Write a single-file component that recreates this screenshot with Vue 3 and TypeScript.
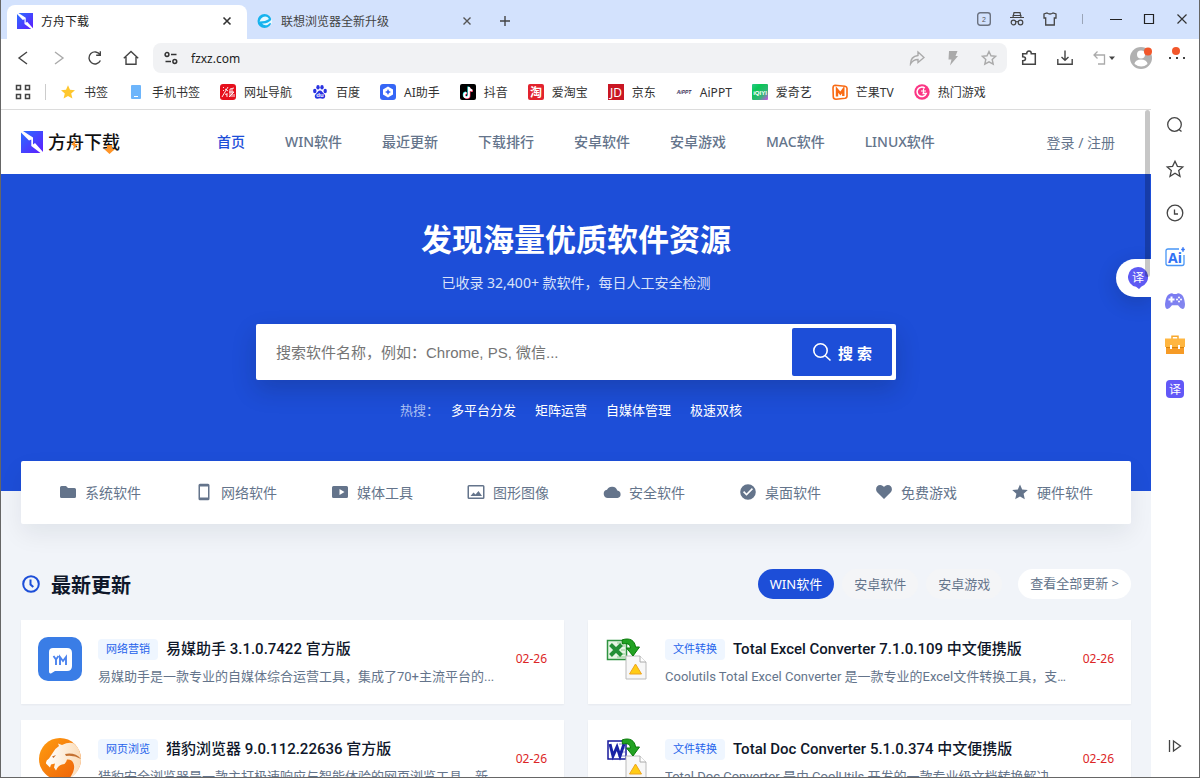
<script setup lang="ts">
import { ref } from 'vue'

interface Glyph {
  label: string
  svg: string
}
interface Entry {
  tag: string
  title: string
  desc: string
  date: string
  icon: string
}

const arkMark =
  '<defs><linearGradient id="ark" x1="0" y1="0" x2="1" y2="1"><stop offset="0" stop-color="#2a6fff"/><stop offset="1" stop-color="#5f1bff"/></linearGradient></defs><rect width="22" height="22" fill="url(#ark)"/><path d="M0 0h2l10 6.500V13.500l2-1.500 8 9v1h-2.500L10.300 15V8.500L8 9.500 0 1.500z" fill="#fff"/>'

const bookmarks: Glyph[] = [
  { label: '书签', svg: '<path d="M8 1.2l2 4.6 5 .5-3.800 3.300 1.200 5L8 12l-4.400 2.600 1.200-5L1 6.300l5-.5z" fill="#fec72e"/>' },
  { label: '手机书签', svg: '<rect x="3" y="1" width="10" height="14" rx="1" fill="#6db5fb"/><path d="M6 12.500h4" stroke="#fff"/>' },
  { label: '网址导航', svg: '<rect width="16" height="16" rx="3" fill="#e60f1c"/><path d="M3 3l1 1M3 6l1 1M8 3L2 13M5 5l3 2M10 5l4-1M9 8h5M10 5v8M12 5v8M9 13l5-5M7 9v4M14 10v3M5 10l2 1" stroke="#fff" stroke-width=".9" fill="none"/>' },
  { label: '百度', svg: '<g fill="#2932e1"><ellipse cx="2.800" cy="7" rx="1.700" ry="2.200"/><ellipse cx="6" cy="3.200" rx="1.700" ry="2.300"/><ellipse cx="10" cy="3.200" rx="1.700" ry="2.300"/><ellipse cx="13.200" cy="7" rx="1.700" ry="2.200"/><path d="M8 6.500c2 0 2.500 2 4 3.200 2 1.600 1.500 5-1.200 5-1 0-1.800-.4-2.800-.4s-1.800.4-2.800.4c-2.700 0-3.200-3.400-1.200-5C5.500 8.500 6 6.500 8 6.500z"/></g><text x="8" y="13.300" font-size="6" text-anchor="middle" font-weight="700" fill="#fff" font-family="Liberation Sans">du</text>' },
  { label: 'AI助手', svg: '<rect width="16" height="16" rx="3" fill="#3566f6"/><path d="M8 2.500l5 3v5l-5 3-5-3v-5z" fill="#fff"/><path d="M8 5l1 2 2 1-2 1-1 2-1-2-2-1 2-1z" fill="#3566f6"/>' },
  { label: '抖音', svg: '<rect width="16" height="16" rx="2" fill="#000"/><g fill="none" stroke-width="1.900"><path d="M8.300 2.500v8.200a2.300 2.300 0 1 1-2.300-2.300M8.300 3c.3 1.800 1.600 2.800 3.400 3" stroke="#25f4ee"/><path d="M9.500 3.500v8.200a2.300 2.300 0 1 1-2.300-2.300M9.500 4c.3 1.800 1.600 2.800 3.400 3" stroke="#fe2c55"/><path d="M8.900 3v8.200a2.300 2.300 0 1 1-2.300-2.300M8.900 3.500c.3 1.800 1.600 2.800 3.400 3" stroke="#fff"/></g>' },
  { label: '爱淘宝', svg: '<rect width="16" height="16" rx="2" fill="#e2232e"/><text x="8" y="12.500" font-size="12" font-weight="700" text-anchor="middle" fill="#fff" font-family="Noto Sans CJK SC">淘</text>' },
  { label: '京东', svg: '<rect width="16" height="16" fill="#c91623"/><text x="8" y="12.500" font-size="12" text-anchor="middle" fill="#fff" font-family="Noto Sans">JD</text>' },
  { label: 'AiPPT', svg: '<text x="8" y="10" font-size="5" font-style="italic" font-weight="700" text-anchor="middle" fill="#3b3159" font-family="Liberation Sans">AiPPT</text>' },
  { label: '爱奇艺', svg: '<defs><linearGradient id="qy" x1="0" y1="0" x2="1" y2="1"><stop offset="0" stop-color="#2ac98a"/><stop offset=".3" stop-color="#08c755"/><stop offset=".68" stop-color="#35b478"/><stop offset="1" stop-color="#d649ef"/></linearGradient></defs><rect width="16" height="16" rx="1" fill="url(#qy)"/><text x="8" y="10.500" font-size="6" font-weight="700" text-anchor="middle" fill="#fff" font-family="Liberation Sans">iQIYI</text>' },
  { label: '芒果TV', svg: '<path d="M3 1.200L13 2.200q2 .3 2 2V12q0 2-2 2.300L4 15.200q-2.500 0-2.700-2L1 4Q1 1.500 3 1.200z" fill="none" stroke="#f96a13" stroke-width="1.600"/><path d="M5 12.500V5.500l3.400 4L11.300 5.500v6.500" fill="none" stroke="#f96a13" stroke-width="2.400"/>' },
  { label: '热门游戏', svg: '<circle cx="8" cy="8" r="7.700" fill="#fb3684"/><path d="M10.800 4.200A4.700 4.700 0 1 0 12.200 9.500H8.500" fill="none" stroke="#fff" stroke-width="1.500"/><path d="M7 7h5M9.500 4.500v5" stroke="#fff" stroke-width="1.200"/>' },
]

const navLinks: string[] = ['首页', 'WIN软件', '最近更新', '下载排行', '安卓软件', '安卓游戏', 'MAC软件', 'LINUX软件']
const hotWords: string[] = ['多平台分发', '矩阵运营', '自媒体管理', '极速双核']

const categories: Glyph[] = [
  { label: '系统软件', svg: '<path d="M1 4.500Q1 3 2.500 3H7l2 2h6.500Q17 5 17 6.500v7q0 1.500-1.500 1.500h-13Q1 15 1 13.500z"/>' },
  { label: '网络软件', svg: '<path fill-rule="evenodd" d="M5 .8h8q1.500 0 1.500 1.500v13.400q0 1.500-1.500 1.500H5q-1.500 0-1.500-1.500V2.300Q3.500.8 5 .8zM5 3.500v11h8v-11z"/>' },
  { label: '媒体工具', svg: '<path fill-rule="evenodd" d="M2.500 3h13Q17 3 17 4.500v9q0 1.500-1.500 1.500h-13Q1 15 1 13.500v-9Q1 3 2.500 3zM8.500 6v6l5-3z"/>' },
  { label: '图形图像', svg: '<path fill-rule="evenodd" d="M2 2h14q1.500 0 1.500 1.500v11Q17.500 16 16 16H2Q.5 16 .5 14.500v-11Q.5 2 2 2zm0 1.500v11h14v-11zM3.500 13l3-3.500 2 2L11.500 8l3.500 5z"/>' },
  { label: '安全软件', svg: '<path d="M5 15a4.200 4.200 0 0 1-1-8.300A5.600 5.600 0 0 1 14.300 7.500 3.800 3.800 0 0 1 14.500 15z"/>' },
  { label: '桌面软件', svg: '<path fill-rule="evenodd" d="M9 1.200a7.800 7.800 0 1 1 0 15.600A7.800 7.800 0 0 1 9 1.200zM4 9.200l3.500 3.500L14 6.200 12.900 5 7.500 10.400 5.200 8z"/>' },
  { label: '免费游戏', svg: '<path d="M9 16L2.700 9.800C-.5 6.500 1.500 2 5.200 2 7 2 8.200 3 9 4.100 9.800 3 11 2 12.800 2c3.700 0 5.700 4.500 2.500 7.800z"/>' },
  { label: '硬件软件', svg: '<path d="M9 1.500l2.200 5.100 5.600.5-4.200 3.700 1.200 5.400L9 13.400l-4.800 2.800 1.200-5.400L1.200 7.100l5.600-.5z"/>' },
]

const tabs: string[] = ['WIN软件', '安卓软件', '安卓游戏']
const activeTab = ref<string>('WIN软件')
const query = ref<string>('')

const convertTail =
  '<path d="M26 27h14l6 6v17H26z" fill="#f7f7f7" stroke="#bbb"/><path d="M40 27v6h6" fill="#fff" stroke="#aaa"/><path d="M35.500 35l6 10h-12z" fill="#ffcc14" stroke="#eea31d"/><path d="M22 11c8-3 13 1 13.500 7h4L33 27l-6.500-8h4c-.5-4-3-5-8-4z" fill="#22a222" stroke="#087a08"/>'

const entries: Entry[] = [
  {
    tag: '网络营销',
    title: '易媒助手 3.1.0.7422 官方版',
    desc: '易媒助手是一款专业的自媒体综合运营工具，集成了70+主流平台的...',
    date: '02-26',
    icon: '<rect width="44" height="44" rx="10" fill="#3a7de6"/><path d="M15 11h14q5 0 5 5v13q0 5-5 5H17l-4 2.500q-2 .5-2-2V15q0-4 4-4z" fill="#fff"/><path d="M15.500 19l2.500 3.500V28M20.500 19l-2.500 3.500M22 28v-8l3 4 3-4v8" fill="none" stroke="#4b83ee" stroke-width="1.900"/>',
  },
  {
    tag: '文件转换',
    title: 'Total Excel Converter 7.1.0.109 中文便携版',
    desc: 'Coolutils Total Excel Converter 是一款专业的Excel文件转换工具，支...',
    date: '02-26',
    icon: '<g transform="translate(-5 -9)"><rect x="7.500" y="12.500" width="19" height="19" fill="#e7f5e4" stroke="#2e9340" stroke-width="1.500"/><path d="M17 15h8M20 18h5M21 22h4M20 26h5M17 29h8" stroke="#91c990"/><path d="M10.500 16.500l11 11M21.500 16.500l-11 11" stroke="#249036" stroke-width="4"/><g transform="translate(0 1)">' + convertTail + '</g></g>',
  },
  {
    tag: '网页浏览',
    title: '猎豹浏览器 9.0.112.22636 官方版',
    desc: '猎豹安全浏览器是一款主打极速响应与智能体验的网页浏览工具，新...',
    date: '02-26',
    icon: '<defs><linearGradient id="chee" x1="0" y1="0" x2="1" y2="1"><stop offset="0" stop-color="#ff9d10"/><stop offset="1" stop-color="#ed5f09"/></linearGradient><linearGradient id="fur" x1="0" y1="0" x2="1" y2="0"><stop offset="0" stop-color="#fff"/><stop offset="1" stop-color="#fbdcb8"/></linearGradient></defs><circle cx="22" cy="22" r="21" fill="url(#chee)"/><path d="M21 9l-1-2.500 4 1.500q7-3.500 12-1.500 7 6 7 15.500 0 13-12 20 7-9 4.500-15.500Q34 22 29 22.500q-1 5-5 5-4 1-6 6l-2-3 1-4-4 1-1 3-4-4q-.5-3 3-5l4-6q2-4 6-6.500z" fill="url(#fur)"/><path d="M14 19.500l4-1.500-2.500 3zM27 17q10-2 16 5-7-4-15-3z" fill="#c47132"/>',
  },
  {
    tag: '文件转换',
    title: 'Total Doc Converter 5.1.0.374 中文便携版',
    desc: 'Total Doc Converter 是由 CoolUtils 开发的一款专业级文档转换解决方...',
    date: '02-26',
    icon: '<g transform="translate(-5 -9)"><rect x="8" y="13" width="18" height="18" fill="#fff" stroke="#17189c" stroke-width="1.500"/><path d="M19 16h6M22 20h3M22 24h3M18 28h7" stroke="#8890d8"/><path d="M10 16l3 12 4-9 3 9 4-12" fill="none" stroke="#1823a5" stroke-width="3"/><g transform="translate(0 1)">' + convertTail + '</g></g>',
  },
]

const sideTools: Glyph[] = [
  { label: '搜索', svg: '<circle cx="9.500" cy="9.500" r="6.800" fill="none" stroke="#444" stroke-width="1.300"/><path d="M14 14.500l2.500 2" stroke="#444" stroke-width="1.400"/>' },
  { label: '收藏', svg: '<path d="M10 2.200l2.400 5.100 5.400.6-4.100 3.700 1.300 5.800-5-3.100-5 3.100 1.300-5.800L2.200 7.900l5.400-.6z" fill="none" stroke="#444" stroke-width="1.300"/>' },
  { label: '历史', svg: '<circle cx="10" cy="10" r="7.800" fill="none" stroke="#444" stroke-width="1.300"/><path d="M9.500 6.500V11H13" fill="none" stroke="#444" stroke-width="1.300"/>' },
  { label: 'AI', svg: '<path d="M14 2H3Q1 2 1 4v12.500q0 2 2 2h14q2 0 2-2V8" fill="none" stroke="#4795f6" stroke-width="1.300"/><path d="M18 0l.7 1.800 1.300.7-1.300.7L18 5l-.7-1.800L16 2.500l1.300-.7z" fill="#3476f6" stroke="#3476f6" stroke-width=".5"/><text x="10" y="15.500" font-size="14" font-weight="700" text-anchor="middle" fill="#3172f4" font-family="Noto Sans">Ai</text>' },
  { label: '游戏', svg: '<defs><linearGradient id="pad" x1="0" y1="0" x2="1" y2="1"><stop offset="0" stop-color="#7777f4"/><stop offset="1" stop-color="#8589ed"/></linearGradient></defs><path d="M4.500 3Q7 1.500 8.500 3h3Q13 1.500 15.500 3 19 4 20 13q0 5-2.500 5Q15 17 13 14.200H7Q5 17 2.500 18 0 18 0 13 1 4 4.500 3z" fill="url(#pad)"/><path d="M6.500 5.500v6M3.500 8.500h6" stroke="#fff" stroke-width="2"/><g fill="#fff"><circle cx="14" cy="6.500" r="1"/><circle cx="14" cy="10.500" r="1"/><circle cx="12" cy="8.500" r="1"/><circle cx="16" cy="8.500" r="1"/></g>' },
  { label: '工具箱', svg: '<path d="M7 4V1.300h6V4" fill="none" stroke="#f7a82d" stroke-width="1.500"/><rect x="1" y="9" width="18" height="10" fill="#f69b26"/><path d="M0 3.500h20V12H0z" fill="#ffb640"/><path d="M1 12.500h18" stroke="#d7820b"/><path d="M6 10v4M14 10v4" stroke="#fff" stroke-width="2"/>' },
  { label: '翻译', svg: '<rect x="1" y="1" width="18" height="18" rx="4" fill="#6258f7"/><text x="10" y="14.500" font-size="12" text-anchor="middle" fill="#fff" font-family="Noto Sans CJK SC">译</text>' },
]
</script>

<template>
  <div class="browser">
    <div class="titlebar">
      <div class="tab active">
        <svg class="i16" viewBox="0 0 22 22" v-html="arkMark"></svg>
        <span>方舟下载</span>
        <button class="close" aria-label="关闭标签页"><svg viewBox="0 0 10 10"><path d="M1.500 1.500l7 7M8.500 1.500l-7 7" stroke="#333" stroke-width="1.600" /></svg></button>
      </div>
      <div class="tab">
        <svg class="i16" viewBox="0 0 16 16"><circle cx="7.500" cy="8" r="7" fill="#17b3ee" /><path d="M2.500 8.500q6 0 9.500-2.500-2-3.500-6-2-2.500 1.300-3.500 4.500zM15 6q-4 5-10 4.500 2 2.500 5.500 1.500l2.500-2 2 1q0-2 0-5z" fill="#e6f8ff" /></svg>
        <span>联想浏览器全新升级</span>
        <button class="close" aria-label="关闭标签页"><svg viewBox="0 0 10 10"><path d="M1.500 1.500l7 7M8.500 1.500l-7 7" stroke="#555" stroke-width="1.400" /></svg></button>
      </div>
      <button class="newtab" aria-label="新建标签页"><svg class="i12" viewBox="0 0 12 12"><path d="M6 1v10M1 6h10" stroke="#444" stroke-width="1.400" /></svg></button>
      <div class="winbtns">
        <button aria-label="标签页列表"><svg class="i16" viewBox="0 0 16 16"><rect x="1.700" y="1.700" width="12.600" height="12.600" rx="2.500" fill="none" stroke="#6b7280" stroke-width="1.400" /><text x="8" y="10.500" font-size="7" text-anchor="middle" fill="#555" font-family="Liberation Sans">2</text></svg></button>
        <button aria-label="无痕模式"><svg class="i16" viewBox="0 0 16 16" fill="none" stroke="#444" stroke-width="1.200"><path d="M4 6l1-4.400h6L12 6M1 6.500h14M3.500 4.500h9M6.500 11q1.500-1 3 0" /><circle cx="4.500" cy="11.500" r="2.300" /><circle cx="11.500" cy="11.500" r="2.300" /></svg></button>
        <button aria-label="皮肤"><svg class="i16" viewBox="0 0 16 16"><path d="M5 2q3 2 6 0l3 1v4h-1.700v7H3.700V7H2V3z" fill="none" stroke="#444" stroke-width="1.300" /></svg></button>
        <span class="sep"></span>
        <button aria-label="最小化"><svg class="i12" viewBox="0 0 12 12"><path d="M0 6.500h12" stroke="#222" /></svg></button>
        <button aria-label="最大化"><svg class="i12" viewBox="0 0 12 12"><path d="M1.500 1.500h9v9h-9z" fill="none" stroke="#222" stroke-width="1.200" /></svg></button>
        <button aria-label="关闭"><svg class="i12" viewBox="0 0 12 12"><path d="M1.500 1.500l9 9M10.500 1.500l-9 9" stroke="#333" stroke-width="1.200" /></svg></button>
      </div>
    </div>

    <div class="toolbar">
      <button aria-label="后退"><svg class="i16" viewBox="0 0 16 16"><path d="M12 2L4 8l8 6" fill="none" stroke="#444" stroke-width="1.400" /></svg></button>
      <button aria-label="前进"><svg class="i16" viewBox="0 0 16 16"><path d="M4 2l8 6-8 6" fill="none" stroke="#aaa" stroke-width="1.400" /></svg></button>
      <button aria-label="刷新"><svg class="i16" viewBox="0 0 16 16"><path d="M13 4.600A6 6 0 1 0 13.400 10.500M13.300 1.200v4H9.200" fill="none" stroke="#444" stroke-width="1.400" /></svg></button>
      <button aria-label="主页"><svg class="i16" viewBox="0 0 16 16"><path d="M.8 8.200L8 1.500l7.200 6.700M3 7v7.300h10V7" fill="none" stroke="#444" stroke-width="1.400" /></svg></button>
      <div class="omnibox">
        <svg class="i16" viewBox="0 0 16 16" fill="none" stroke="#333" stroke-width="1.500"><circle cx="4" cy="4.500" r="1.900" /><path d="M8 4.500h5.500M2.500 11.500H8" /><circle cx="11.800" cy="11.500" r="1.900" /></svg>
        <input type="text" value="fzxz.com" aria-label="地址栏" />
        <button aria-label="分享"><svg class="i16" viewBox="0 0 16 16"><path d="M9 2l6 5.500-6 5V9.500Q4 9.500 1.500 14 1.500 6.500 9 5.500z" fill="none" stroke="#aaa" stroke-width="1.400" /></svg></button>
        <button aria-label="极速"><svg class="i16" viewBox="0 0 16 16"><path d="M4 1h8.500L10.500 6H13L5 15.500 6.500 9.500H3.500z" fill="#aaa" /></svg></button>
        <button aria-label="收藏本页"><svg class="i16" viewBox="0 0 16 16"><path d="M8 1.500l2 4.300 4.700.5-3.500 3.200 1 4.700L8 11.800l-4.200 2.400 1-4.700L1.300 6.300 6 5.800z" fill="none" stroke="#aaa" stroke-width="1.400" /></svg></button>
      </div>
      <button aria-label="扩展"><svg class="i16" viewBox="0 0 16 16"><path d="M1.700 3.700h4q0-2.700 2.300-2.700t2.300 2.700h4v10.600H1.700v-3.500q2.800 0 2.800-2t-2.800-2z" fill="none" stroke="#444" stroke-width="1.500" /></svg></button>
      <button aria-label="下载"><svg class="i16" viewBox="0 0 16 16"><path d="M8 .5V10M4.500 7L8 10.200 11.500 7M.8 9v5.300h14.400V9" fill="none" stroke="#444" stroke-width="1.400" /></svg></button>
      <button class="undo" aria-label="恢复"><svg viewBox="0 0 24 16"><path d="M6.500 1.500L3 5l3.500 3.500M3 5h10.500v9H7" fill="none" stroke="#aaa" stroke-width="1.300" /><path d="M18 6.500h6l-3 3.500z" fill="#444" /></svg></button>
      <button aria-label="账户"><svg class="i22" viewBox="0 0 22 22"><circle cx="11" cy="11" r="11" fill="#b1b1b1" /><circle cx="11" cy="7.500" r="4" fill="#fff" /><path d="M4.500 17a6.500 4.500 0 0 1 13 0q-6 5-13 0z" fill="#fff" /><circle cx="18" cy="4.500" r="4" fill="#f2572b" /></svg></button>
      <button aria-label="菜单"><svg class="i22" viewBox="0 0 22 22"><circle cx="10" cy="4" r="4" fill="#f2572b" /><path d="M3 10h2v2H3zM10 10h2v2h-2zM17 10h2v2h-2z" fill="#444" /></svg></button>
    </div>

    <nav class="bookmarks" aria-label="书签栏">
      <button aria-label="全部应用"><svg class="i16" viewBox="0 0 16 16" fill="none" stroke="#444" stroke-width="1.500"><path d="M1.500 1.500h4v4h-4zM10.500 1.500h4v4h-4zM1.500 10.500h4v4h-4zM10.500 10.500h4v4h-4z" /></svg></button>
      <span class="bsep"></span>
      <a v-for="b in bookmarks" :key="b.label" href="#"><svg class="i16" viewBox="0 0 16 16" v-html="b.svg"></svg>{{ b.label }}</a>
    </nav>

    <div class="body">
      <div class="page">
        <header class="header">
          <a class="logo" href="#">
            <svg class="i22" viewBox="0 0 22 22" v-html="arkMark"></svg>
            <span>方舟下载</span>
            <svg class="sparks" viewBox="0 0 72 24"><path d="M28 8l-5 6h3l-1 5 5-6h-3z" fill="#ff9528" /><path d="M59 14h5v4h3l-5.500 5L56 18h3z" fill="#ff9528" /></svg>
          </a>
          <nav class="nav">
            <a v-for="(n, i) in navLinks" :key="n" href="#" :class="{ on: i === 0 }">{{ n }}</a>
          </nav>
          <a class="login" href="#">登录 / 注册</a>
        </header>

        <section class="hero">
          <h1>发现海量优质软件资源</h1>
          <p>已收录 32,400+ 款软件，每日人工安全检测</p>
          <form class="search" @submit.prevent>
            <input v-model="query" type="text" aria-label="搜索软件" placeholder="搜索软件名称，例如：Chrome, PS, 微信..." />
            <button type="submit">
              <svg viewBox="0 0 20 20"><circle cx="8.500" cy="8.500" r="6.700" fill="none" stroke="#fff" stroke-width="1.600" /><path d="M13 13.500l5.500 5" stroke="#fff" stroke-width="1.600" /></svg>
              <span>搜 索</span>
            </button>
          </form>
          <div class="hot">
            <span>热搜：</span>
            <a v-for="h in hotWords" :key="h" href="#">{{ h }}</a>
          </div>
        </section>

        <main class="content">
          <nav class="cats" aria-label="软件分类">
            <a v-for="c in categories" :key="c.label" href="#"><svg viewBox="0 0 18 18" v-html="c.svg"></svg>{{ c.label }}</a>
          </nav>

          <div class="sechead">
            <svg viewBox="0 0 20 20" fill="none" stroke="#1d4ed8" stroke-width="2"><circle cx="10" cy="10" r="7.800" /><path d="M9.500 5.500v5l2.800 2.500" /></svg>
            <h2>最新更新</h2>
            <div class="pills">
              <button v-for="t in tabs" :key="t" :class="{ on: t === activeTab }" @click="activeTab = t">{{ t }}</button>
            </div>
            <a class="all" href="#">查看全部更新 &gt;</a>
          </div>

          <div class="grid">
            <article v-for="e in entries" :key="e.title" class="card">
              <svg class="appicon" viewBox="0 0 44 44" v-html="e.icon"></svg>
              <div class="info">
                <div class="line"><span class="tag">{{ e.tag }}</span><h3>{{ e.title }}</h3></div>
                <p>{{ e.desc }}</p>
              </div>
              <time>{{ e.date }}</time>
            </article>
          </div>
        </main>

        <button class="floater" aria-label="翻译网页">
          <svg viewBox="0 0 20 22"><path d="M10 0a10 10 0 0 1 3.500 19.400L11 22l-3-2.200A10 10 0 0 1 10 0z" fill="#5e5af3" /><text x="10" y="14.500" font-size="12" text-anchor="middle" fill="#fff" font-family="Noto Sans CJK SC">译</text></svg>
        </button>
        <div class="thumb"></div>
      </div>

      <aside class="side">
        <button v-for="s in sideTools" :key="s.label" :aria-label="s.label"><svg viewBox="0 0 20 20" v-html="s.svg"></svg></button>
        <button class="last" aria-label="收起侧栏"><svg viewBox="0 0 20 20"><path d="M4.500 4v12M8.500 5l7 5-7 5z" fill="none" stroke="#444" stroke-width="1.300" /></svg></button>
      </aside>
    </div>
  </div>
</template>

<style>
body {
  margin: 0;
}
</style>

<style scoped>
.browser {
  box-sizing: border-box;
  display: flex;
  flex-direction: column;
  height: 100vh;
  border: 1px solid #666;
  border-top: 0;
  overflow: hidden;
  background: #fff;
  font-family: "Noto Sans", "Noto Sans CJK SC", sans-serif;
  font-size: 12px;
  color: #333;
}
.browser * {
  box-sizing: border-box;
}
svg {
  display: block;
  flex: none;
}
button {
  display: flex;
  align-items: center;
  justify-content: center;
  padding: 0;
  border: 0;
  background: none;
  font: inherit;
  color: inherit;
}
a {
  color: inherit;
  text-decoration: none;
}
.i12 {
  width: 12px;
  height: 12px;
}
.i16 {
  width: 16px;
  height: 16px;
}
.i22 {
  width: 22px;
  height: 22px;
}
.titlebar {
  display: flex;
  flex: none;
  height: 39px;
  padding: 5px 0 0 6px;
  background: #d3e2fd;
}
.tab {
  display: flex;
  align-items: center;
  gap: 8px;
  width: 240px;
  padding: 0 10px 3px;
  color: #444;
}
.tab.active {
  border-radius: 8px 8px 0 0;
  background: #fff;
  color: #222;
}
.close {
  width: 20px;
  height: 20px;
  margin-left: auto;
}
.close svg {
  width: 10px;
  height: 10px;
}
.newtab {
  width: 36px;
  padding-bottom: 3px;
}
.winbtns {
  display: flex;
  margin-left: auto;
  padding: 0 1px 6px 0;
}
.winbtns button,
.sep {
  width: 33px;
}
.sep {
  align-self: center;
  height: 10px;
  background: linear-gradient(#9aa5b8, #9aa5b8) center / 1px 100% no-repeat;
}
.toolbar {
  display: flex;
  flex: none;
  height: 40px;
  padding: 4px 4px 6px;
}
.toolbar > button {
  width: 36px;
}
.toolbar > .undo {
  width: 40px;
}
.undo svg {
  width: 24px;
  height: 16px;
}
.omnibox {
  display: flex;
  flex: 1;
  align-items: center;
  margin: 0 4px;
  padding: 0 0 0 10px;
  border-radius: 8px;
  background: #f1f2f4;
}
.omnibox input {
  flex: 1;
  min-width: 0;
  margin-left: 12px;
  padding: 0;
  border: 0;
  outline: 0;
  background: none;
  font: inherit;
  color: #222;
}
.omnibox button {
  width: 36px;
}
.bookmarks {
  display: flex;
  flex: none;
  align-items: center;
  gap: 20px;
  height: 30px;
  padding: 0 14px 4px;
  color: #333;
  white-space: nowrap;
}
.bookmarks a {
  display: flex;
  align-items: center;
  gap: 8px;
}
.bsep {
  width: 1px;
  height: 16px;
  margin: 0 -6px;
  background: #ccc;
}
.body {
  display: flex;
  flex: 1;
  min-height: 0;
}
.page {
  position: relative;
  flex: 1;
  min-width: 0;
  overflow: hidden;
  border-top: 1px solid #dcdcdc;
  background: #f1f4f9;
  font-size: 14px;
}
.header {
  display: flex;
  align-items: center;
  height: 64px;
  padding: 0 20px;
  background: #fff;
  color: #64748b;
  white-space: nowrap;
}
.logo {
  position: relative;
  display: flex;
  align-items: center;
  gap: 5px;
  color: #111;
  font-size: 18px;
  line-height: 24px;
  font-weight: 500;
}
.sparks {
  position: absolute;
  right: 0;
  bottom: -1px;
  width: 72px;
  height: 24px;
}
.nav {
  display: flex;
  gap: 40px;
  margin-left: 97px;
  padding-bottom: 2px;
  font-weight: 500;
}
.nav .on {
  color: #1d4ed8;
}
.login {
  margin-left: auto;
  padding-right: 16px;
}
.hero {
  display: flex;
  flex-direction: column;
  align-items: center;
  padding: 43px 20px 71px;
  background: #1d4ed8;
  color: #fff;
}
h1 {
  margin: 0;
  font-size: 31px;
  line-height: 44px;
  font-weight: 700;
}
.hero p {
  margin: 11px 0 30px;
  line-height: 22px;
  color: #d9e2f9;
}
.search {
  display: flex;
  width: 100%;
  max-width: 640px;
  height: 56px;
  padding: 4px;
  border-radius: 2px;
  background: #fff;
  box-shadow: 0 10px 24px rgba(15, 23, 42, 0.2);
}
.search input {
  flex: 1;
  min-width: 0;
  padding: 0 16px;
  border: 0;
  outline: 0;
  font: 15px "Liberation Sans", "Noto Sans CJK SC", sans-serif;
  color: #333;
}
.search input::placeholder {
  color: #757575;
  opacity: 1;
}
.search button {
  gap: 6px;
  width: 100px;
  border-radius: 2px;
  background: #1d4ed8;
  color: #fff;
  font-size: 15px;
  font-weight: 700;
}
.search svg {
  width: 20px;
  height: 20px;
}
.hot {
  display: flex;
  gap: 19px;
  margin-top: 20px;
  padding-right: 10px;
  font-size: 13px;
  line-height: 20px;
}
.hot span {
  margin-right: -7px;
  color: #a9bdf0;
}
.content {
  padding: 0 20px;
}
.cats {
  display: grid;
  grid-template-columns: repeat(8, 1fr);
  height: 63px;
  margin-top: -30px;
  padding: 0 11px 2px;
  border-radius: 2px;
  background: #fff;
  box-shadow: 0 10px 24px rgba(15, 23, 42, 0.07);
  color: #64748b;
}
.cats a {
  display: flex;
  align-items: center;
  justify-content: center;
  gap: 8px;
}
.cats svg {
  width: 18px;
  height: 18px;
  fill: #64748b;
}
.sechead {
  display: flex;
  align-items: center;
  height: 30px;
  margin: 45px 0 21px;
  font-size: 13px;
  color: #64748b;
  white-space: nowrap;
}
.sechead svg {
  width: 20px;
  height: 20px;
}
h2 {
  margin: 0 0 0 10px;
  padding-top: 4px;
  color: #0f172a;
  font-size: 20px;
  line-height: 26px;
  font-weight: 700;
}
.pills {
  display: flex;
  gap: 8px;
  margin-left: auto;
}
.pills button,
.all {
  height: 30px;
  padding: 0 12px;
  border-radius: 15px;
  background: #f4f5f7;
  line-height: 28px;
}
.pills .on {
  background: #1d4ed8;
  color: #fff;
}
.all {
  margin-left: 16px;
  background: #fff;
}
.grid {
  display: grid;
  grid-template-columns: 1fr 1fr;
  gap: 16px 24px;
}
.card {
  display: flex;
  gap: 16px;
  min-width: 0;
  height: 84px;
  padding: 17px;
  background: #fff;
  box-shadow: 0 1px 2px rgba(15, 23, 42, 0.05);
}
.appicon {
  width: 44px;
  height: 44px;
}
.info {
  flex: 1;
  min-width: 0;
  font-family: Roboto, "Noto Sans CJK SC", sans-serif;
}
.line {
  display: flex;
  align-items: center;
  gap: 8px;
  height: 24px;
  white-space: nowrap;
}
.tag {
  padding: 0 8px;
  border-radius: 4px;
  background: #eff6ff;
  color: #2563eb;
  font-size: 11px;
  line-height: 21px;
}
h3 {
  margin: 0;
  color: #0f172a;
  font-size: 15px;
  line-height: 24px;
  font-weight: 500;
}
.info p {
  margin: 6px 0 0;
  overflow: hidden;
  color: #64748b;
  font-size: 13px;
  line-height: 20px;
  text-overflow: ellipsis;
  white-space: nowrap;
}
time {
  align-self: flex-start;
  color: #dc2626;
  font-size: 12px;
  line-height: 44px;
}
.floater {
  position: absolute;
  top: 149px;
  right: 0;
  width: 35px;
  height: 38px;
  padding: 0 3px 0 11px;
  border-radius: 19px 0 0 19px;
  background: #fff;
  box-shadow: 0 6px 20px rgba(15, 23, 42, 0.2);
}
.floater svg {
  width: 20px;
  height: 22px;
}
.thumb {
  position: absolute;
  top: 0;
  right: 1px;
  width: 5px;
  height: 167px;
  border-radius: 3px;
  background: rgba(0, 0, 0, 0.22);
}
.side {
  display: flex;
  flex: none;
  flex-direction: column;
  align-items: center;
  gap: 14px;
  width: 48px;
  padding: 1px 0 16px;
}
.side button {
  width: 30px;
  height: 30px;
}
.side svg {
  width: 20px;
  height: 20px;
}
.side .last {
  margin-top: auto;
}
</style>
